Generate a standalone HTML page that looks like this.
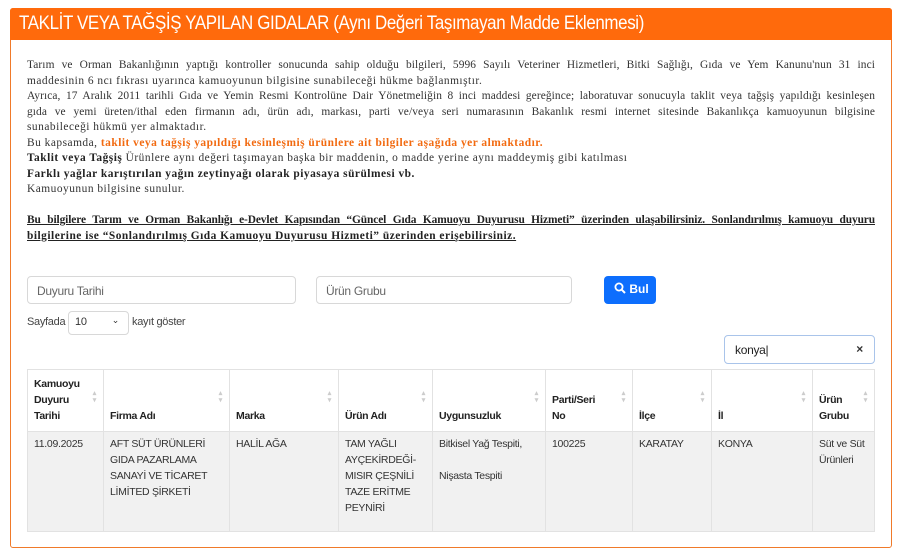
<!DOCTYPE html>
<html><head><meta charset="utf-8"><style>
*{box-sizing:border-box;margin:0;padding:0}
body{width:900px;height:523px;overflow:hidden;background:#fff;font-family:"Liberation Sans",sans-serif;position:relative}
.card{position:absolute;left:10px;top:8px;width:882px;height:540px;border:1px solid #f07a2a;border-radius:3px}
.hd{position:absolute;left:10px;top:8px;width:882px;height:32px;background:#ff6a0c;color:#fff;font-size:19px;line-height:32px;padding-left:9px;border-radius:3px 3px 0 0}
.hd span{display:inline-block;transform:scaleX(0.89);transform-origin:left;white-space:nowrap;letter-spacing:-0.4px}
.txt{position:absolute;left:27px;top:58px;width:848px;font-family:"Liberation Serif",serif;font-size:11.4px;letter-spacing:0.5px;line-height:15.5px;color:#333}
.txt div{white-space:nowrap;height:15.5px}
.txt .j{text-align:justify;text-align-last:justify;letter-spacing:0.1px}
.txt b{color:#222}
.or{color:#f26a10;font-weight:bold}
.u{font-weight:bold;text-decoration:underline;color:#222}
.inp{position:absolute;height:28px;border:1px solid #d8d8d8;border-radius:4px;font-size:12px;color:#666;padding:7px 9px;letter-spacing:-0.3px}
.btn{position:absolute;left:604px;top:276px;width:52px;height:28px;background:#0d6efd;border-radius:4px;color:#fff;font-size:12px;font-weight:bold;line-height:27px;padding-left:10px}
.small{position:absolute;font-size:11px;color:#444;letter-spacing:-0.3px}
table{position:absolute;left:27px;top:369px;width:848px;border-collapse:collapse;font-size:10.5px;letter-spacing:-0.3px}
th{border:1px solid #e2e2e2;text-align:left;vertical-align:bottom;padding:6px 6px 7px;font-weight:bold;color:#222;height:61px;line-height:16px;position:relative}
th::after{content:"▴\A▾";white-space:pre;position:absolute;right:7px;top:20px;font-size:7px;line-height:7px;color:#ccc}
td{border:1px solid #e2e2e2;background:#f1f1f1;vertical-align:top;padding:4px 6px;color:#333;line-height:16px;height:100px}
</style></head><body>
<div class="card"></div>
<div class="hd"><span>TAKLİT VEYA TAĞŞİŞ YAPILAN GIDALAR (Aynı Değeri Taşımayan Madde Eklenmesi)</span></div>
<div class="txt">
<div class="j">Tarım ve Orman Bakanlığının yaptığı kontroller sonucunda sahip olduğu bilgileri, 5996 Sayılı Veteriner Hizmetleri, Bitki Sağlığı, Gıda ve Yem Kanunu'nun 31 inci</div>
<div>maddesinin 6 ncı fıkrası uyarınca kamuoyunun bilgisine sunabileceği hükme bağlanmıştır.</div>
<div class="j">Ayrıca, 17 Aralık 2011 tarihli Gıda ve Yemin Resmi Kontrolüne Dair Yönetmeliğin 8 inci maddesi gereğince; laboratuvar sonucuyla taklit veya tağşiş yapıldığı kesinleşen</div>
<div class="j">gıda ve yemi üreten/ithal eden firmanın adı, ürün adı, markası, parti ve/veya seri numarasının Bakanlık resmi internet sitesinde Bakanlıkça kamuoyunun bilgisine</div>
<div>sunabileceği hükmü yer almaktadır.</div>
<div>Bu kapsamda, <span class="or">taklit veya tağşiş yapıldığı kesinleşmiş ürünlere ait bilgiler aşağıda yer almaktadır.</span></div>
<div><b>Taklit veya Tağşiş</b> Ürünlere aynı değeri taşımayan başka bir maddenin, o madde yerine aynı maddeymiş gibi katılması</div>
<div><b>Farklı yağlar karıştırılan yağın zeytinyağı olarak piyasaya sürülmesi vb.</b></div>
<div>Kamuoyunun bilgisine sunulur.</div>
<div></div>
<div class="j u" style="letter-spacing:-0.1px">Bu bilgilere Tarım ve Orman Bakanlığı e-Devlet Kapısından “Güncel Gıda Kamuoyu Duyurusu Hizmeti” üzerinden ulaşabilirsiniz. Sonlandırılmış kamuoyu duyuru</div>
<div class="u">bilgilerine ise “Sonlandırılmış Gıda Kamuoyu Duyurusu Hizmeti” üzerinden erişebilirsiniz.</div>
</div>
<div class="inp" style="left:27px;top:276px;width:269px">Duyuru Tarihi</div>
<div class="inp" style="left:316px;top:276px;width:256px">Ürün Grubu</div>
<div class="btn"><svg width="12" height="12" viewBox="0 0 12 12" style="vertical-align:-1px"><circle cx="5" cy="5" r="3.6" fill="none" stroke="#fff" stroke-width="1.8"/><path d="M7.6 7.6L11 11" stroke="#fff" stroke-width="2"/></svg> Bul</div>
<div class="small" style="left:27px;top:316px">Sayfada</div>
<div class="inp" style="left:68px;top:311px;width:61px;height:24px;padding:4px 6px;color:#333;font-size:11px">10<span style="position:absolute;right:9px;top:3px;font-size:9px">⌄</span></div>
<div class="small" style="left:132px;top:316px">kayıt göster</div>
<div class="inp" style="left:724px;top:335px;width:151px;height:29px;border-color:#a9c4ea;color:#222;font-size:12px;padding:7px 10px">konya|<span style="position:absolute;right:11px;top:6px;font-weight:bold;color:#333">×</span></div>
<table>
<tr><th style="width:76px">Kamuoyu Duyuru Tarihi</th><th style="width:126px">Firma Adı</th><th style="width:109px">Marka</th><th style="width:94px">Ürün Adı</th><th style="width:113px">Uygunsuzluk</th><th style="width:87px">Parti/Seri<br>No</th><th style="width:79px">İlçe</th><th style="width:101px">İl</th><th>Ürün Grubu</th></tr>
<tr><td>11.09.2025</td><td>AFT SÜT ÜRÜNLERİ GIDA PAZARLAMA SANAYİ VE TİCARET LİMİTED ŞİRKETİ</td><td>HALİL AĞA</td><td>TAM YAĞLI AYÇEKİRDEĞİ-MISIR ÇEŞNİLİ TAZE ERİTME PEYNİRİ</td><td>Bitkisel Yağ Tespiti,<br><br>Nişasta Tespiti</td><td>100225</td><td>KARATAY</td><td>KONYA</td><td>Süt ve Süt Ürünleri</td></tr>
</table>
</body></html>
